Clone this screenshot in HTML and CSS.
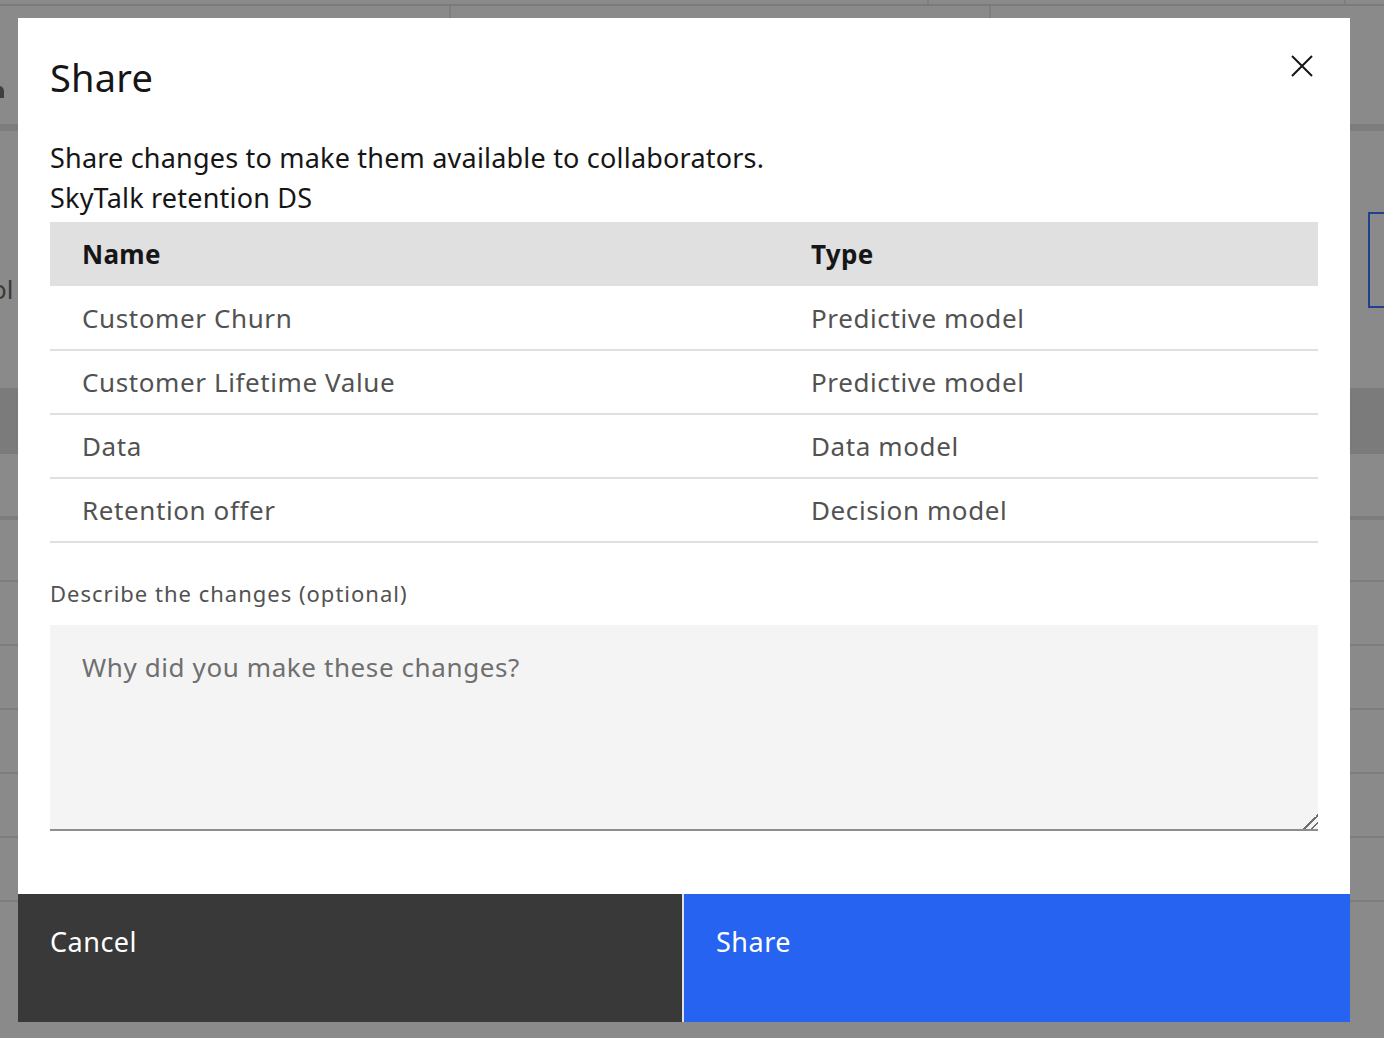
FILE: index.html
```html
<!DOCTYPE html>
<html lang="en">
<head>
<meta charset="utf-8">
<title>Share</title>
<link rel="stylesheet" href="styles.css">
</head>
<body>
<div class="page">
  <div class="bg-top">
    <div class="bg-cell bg-c1"></div>
    <div class="bg-cell bg-c2"></div>
    <div class="bg-cell bg-c3"></div>
  </div>
  <div class="bg-line"></div>
  <div class="bg-head">
    <div class="bg-cell bg-h1"><span class="bg-icon"></span></div>
    <div class="bg-cell bg-h2"></div>
    <div class="bg-cell bg-h3"></div>
  </div>
  <div class="bg-band"></div>
  <div class="bg-body">
    <span class="bg-text">ol</span>
    <span class="bg-box"></span>
  </div>
  <div class="bg-dark"></div>
  <div class="bg-row bg-row-first"></div>
  <div class="bg-row"></div>
  <div class="bg-row"></div>
  <div class="bg-row"></div>
  <div class="bg-row"></div>
  <div class="bg-row"></div>
  <div class="bg-row"></div>
  <div class="bg-row"></div>
</div>

<div class="overlay">
  <div class="modal" role="dialog" aria-labelledby="modal-title">
    <div class="modal-body">
      <div class="modal-header">
        <h2 id="modal-title" class="modal-title">Share</h2>
        <button class="close-btn" aria-label="Close">
          <svg width="24" height="24" viewBox="0 0 24 24" aria-hidden="true">
            <path d="M2 2 L22 22 M22 2 L2 22" stroke="#161616" stroke-width="2" fill="none"/>
          </svg>
        </button>
      </div>
      <p class="desc">Share changes to make them available to collaborators.</p>
      <p class="desc">SkyTalk retention DS</p>
      <table class="items">
        <thead>
          <tr><th class="col-name">Name</th><th>Type</th></tr>
        </thead>
        <tbody>
          <tr><td>Customer Churn</td><td>Predictive model</td></tr>
          <tr><td>Customer Lifetime Value</td><td>Predictive model</td></tr>
          <tr><td>Data</td><td>Data model</td></tr>
          <tr><td>Retention offer</td><td>Decision model</td></tr>
        </tbody>
      </table>
      <label class="field-label" for="changes">Describe the changes (optional)</label>
      <textarea id="changes" class="field" placeholder="Why did you make these changes?"></textarea>
    </div>
    <div class="modal-footer">
      <button class="btn btn-secondary">Cancel</button>
      <button class="btn btn-primary">Share</button>
    </div>
  </div>
</div>
</body>
</html>
```

FILE: styles.css
```css
* { box-sizing: border-box; }
html, body { margin: 0; padding: 0; }
body {
  width: 1384px;
  height: 1038px;
  overflow: hidden;
  background: #8a8a8a;
  font-family: "Noto Sans", "Open Sans", sans-serif;
}

/* ---------- backdrop page (dimmed) ---------- */
.page { display: flex; flex-direction: column; }
.bg-top { display: flex; height: 4px; }
.bg-cell { border-right: 2px solid #7f7f7f; }
.bg-c1 { width: 929px; }
.bg-c2 { width: 417px; }
.bg-c3 { flex: 1; border-right: 0; }
.bg-line { height: 2px; background: #7b7b7b; }
.bg-head { display: flex; height: 118px; }
.bg-h1 { width: 451px; position: relative; }
.bg-h2 { width: 540px; }
.bg-h3 { flex: 1; border-right: 0; }
.bg-icon {
  position: absolute; left: -6px; top: 80px;
  width: 10px; height: 12px; border-radius: 5px 5px 0 0; background: #3f3f3f;
}
.bg-band { height: 7px; background: #7d7d7d; }
.bg-body { height: 257px; position: relative; }
.bg-text {
  position: absolute; left: -9px; top: 140px;
  font-size: 26px; color: #3a3a3a;
}
.bg-box {
  position: absolute; left: 1368px; top: 81px;
  width: 30px; height: 96px; border: 2px solid #1f3f8f;
}
.bg-dark { height: 66px; background: #7b7b7b; }
.bg-row { height: 64px; border-top: 2px solid #7d7d7d; }
.bg-row-first { height: 62px; border-top: 0; }
.bg-row-first + .bg-row { border-top-width: 4px; }

/* ---------- modal ---------- */
.overlay {
  position: fixed; inset: 0;
  display: flex; align-items: flex-start; justify-content: flex-start;
  padding: 18px 0 0 18px;
}
.modal {
  width: 1332px; height: 1004px;
  background: #ffffff;
  display: flex; flex-direction: column;
}
.modal-body {
  flex: 1;
  padding: 0 32px;
  display: flex; flex-direction: column;
}
.modal-header {
  display: flex; justify-content: space-between; align-items: flex-start;
  height: 120px;
}
.modal-title {
  margin: 0; padding-top: 31px;
  font-size: 38px; font-weight: 400; color: #161616; line-height: 56px;
  letter-spacing: 0.2px;
}
.close-btn {
  margin: 24px -8px 0 0;
  width: 48px; height: 48px; padding: 0;
  border: 0; background: transparent;
  display: flex; align-items: center; justify-content: center;
}
.desc {
  margin: 0;
  font-size: 27px; line-height: 40px; color: #161616;
  letter-spacing: 0.2px;
}
.items {
  width: 100%;
  border-collapse: collapse;
  margin-top: 4px;
}
.items th {
  background: #e0e0e0;
  height: 64px;
  text-align: left; font-weight: 700;
  font-size: 26px; color: #161616;
  padding: 0 32px;
  letter-spacing: 0.3px;
}
.items th.col-name { width: 729px; }
.items td {
  height: 64px;
  padding: 0 32px;
  font-size: 26px; color: #525252;
  letter-spacing: 0.6px;
  border-bottom: 2px solid #e0e0e0;
}
.field-label {
  margin-top: 36px;
  font-size: 22px; color: #525252; line-height: 28px;
  letter-spacing: 1px;
}
.field {
  margin-top: 18px;
  height: 206px;
  resize: vertical;
  background: #f4f4f4;
  border: 0; border-bottom: 2px solid #8d8d8d;
  padding: 24px 32px;
  font-family: inherit;
  font-size: 26px; color: #161616; line-height: 36px;
  letter-spacing: 0.6px;
  outline: none;
}
.field::placeholder { color: #6f6f6f; }
.field::-webkit-resizer {
  background: linear-gradient(135deg,
    transparent 0 50%, #6f6f6f 50% 58%, transparent 58% 74%, #6f6f6f 74% 82%, transparent 82%);
}

.modal-footer {
  display: flex;
  height: 128px;
  background: #e0e0e0;
}
.btn {
  border: 0;
  text-align: left;
  display: flex; align-items: flex-start;
  padding: 30px 32px;
  font-family: inherit;
  font-size: 27px; color: #ffffff; line-height: 36px;
  letter-spacing: 0.5px;
}
.btn-secondary { background: #393939; width: 664px; }
.btn-primary { background: #2563f0; margin-left: 2px; flex: 1; }
```
